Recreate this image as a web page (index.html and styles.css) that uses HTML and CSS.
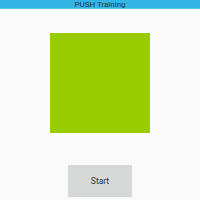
FILE: index.html
```html
<!DOCTYPE html>
<html lang="en">
<head>
	<meta charset="UTF-8">
	<title>PUSH Training</title>
	<link rel="stylesheet" href="styles.css">
</head>
<body>
	<div class="title-bar">PUSH Training</div>
	<div class="content">
		<div class="square"></div>
		<button class="start-button">Start</button>
	</div>
</body>
</html>
```
FILE: styles.css
```css
html, body {
	margin: 0;
	padding: 0;
	background-color: #fafafa;
	font-family: Roboto, "Liberation Sans", sans-serif;
}
.title-bar {
	height: 8px;
	line-height: 9px;
	background-color: #33b5e5;
	border-bottom: 1px solid #5ec6ec;
	color: #1a3a4a;
	font-size: 8px;
	text-align: center;
	overflow: hidden;
}
.content {
	display: flex;
	flex-direction: column;
	align-items: center;
	padding-top: 24px;
}
.square {
	width: 100px;
	height: 100px;
	background-color: #99cc00;
}
.start-button {
	margin-top: 32px;
	width: 64px;
	height: 32px;
	border: none;
	padding: 0;
	background-color: #d6d7d7;
	color: #333333;
	font-family: Roboto, "Liberation Sans", sans-serif;
	font-size: 8.5px;
}
```
